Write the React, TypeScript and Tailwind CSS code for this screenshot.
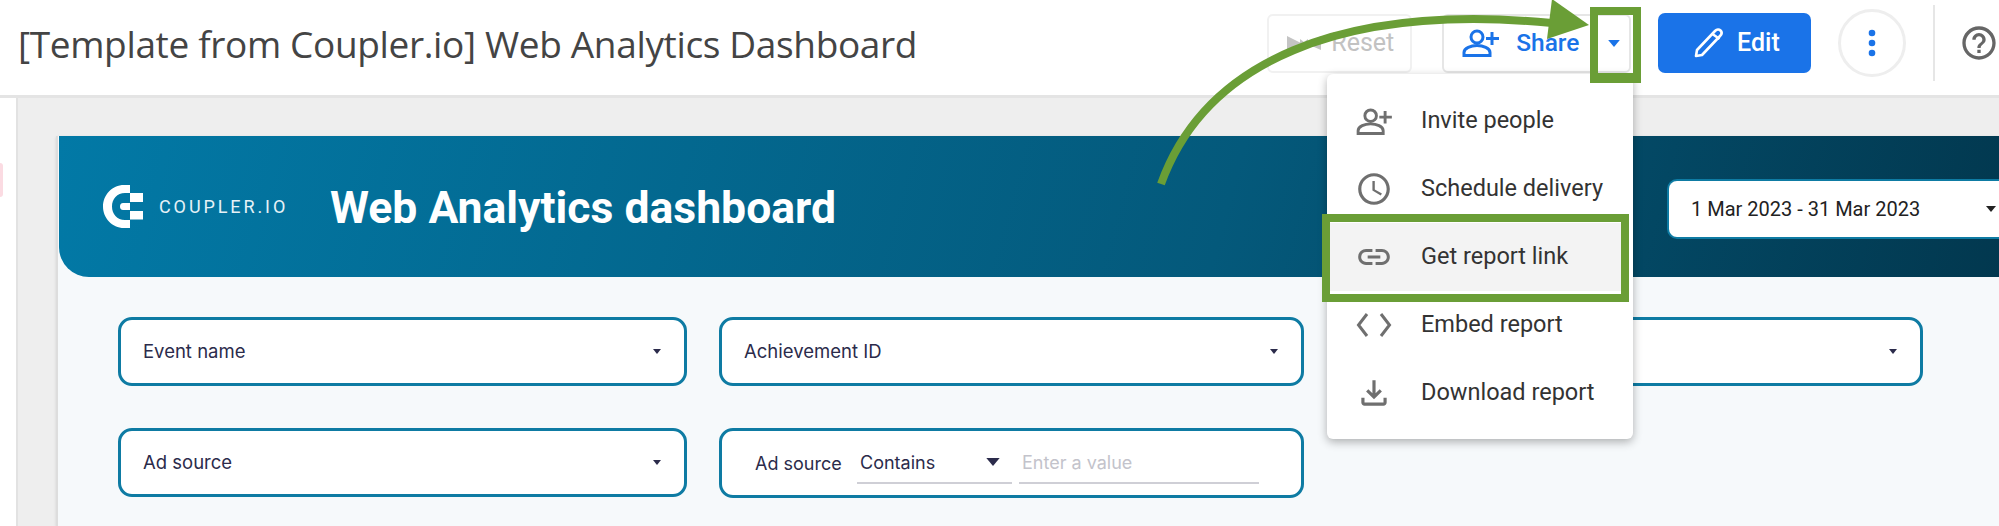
import React from "react";
import { MdOutlineSchedule, MdLink, MdOutlineFileDownload, MdHelpOutline } from "react-icons/md";

const PersonAdd = ({ className }: { className: string }) => (
  <svg viewBox="0 0 38 28" className={className} fill="none" stroke="currentColor" strokeWidth="3">
    <circle cx="15" cy="8" r="6" />
    <path d="M2 26.5v-3c0-4.500 7-7 13-7s13 2.500 13 7v3z" />
    <path d="M30 3v13M24 9.500h13" />
  </svg>
);

const Caret = ({ className }: { className: string }) => (
  <svg viewBox="0 0 10 6" className={className} fill="currentColor">
    <path d="M0 0h10L5 6z" />
  </svg>
);

const Filter = ({ label }: { label?: string }) => (
  <div className="flex h-[69px] items-center rounded-[14px] border-[3px] border-[#0e7ba3] bg-white pl-[22px] font-['Inter',sans-serif] text-[18.500px] text-[#2b2b4b]">
    <span className="flex-1">{label}</span>
    <Caret className="mr-[23px] h-[5px] w-[8px]" />
  </div>
);

const MenuItem = ({ icon, label }: { icon: React.ReactNode; label: string }) => (
  <div className="flex h-[68px] items-center">
    <span className="flex w-[94px] justify-center text-[#6f6f6f]">{icon}</span>
    <span className="text-[23.5px] text-[#333333]">{label}</span>
  </div>
);

export default function App() {
  return (
    <div className="relative h-[526px] w-[1999px] overflow-hidden bg-white font-['Roboto',sans-serif]">
      <header className="flex h-[98px] items-center border-b-[3px] border-[#e4e4e4] pb-[9px] pl-[18px]">
        <h1 className="w-[1250px] translate-y-[1px] font-['Open_Sans',sans-serif] text-[37px] font-normal tracking-[-0.35px] text-[#444444]">
          [Template from Coupler.io] Web Analytics Dashboard
        </h1>
        <button className="flex h-[59px] w-[145px] items-center rounded-[6px] border-2 border-[#f1f1f1] pl-[18px] text-[25px] text-[#c2c2c2]">
          <svg viewBox="0 0 34 16" className="mr-[10px] h-[16px] w-[34px]" fill="#c4c4c4">
            <path d="M0 1l15 7.500L0 15zM34 1L19 8.500 34 15zM13 4l4 3 4-3v8l-4-3-4 3z" />
          </svg>
          Reset
        </button>
        <button className="ml-[30px] flex h-[59px] w-[189px] items-center rounded-[6px] border-2 border-[#e6e6e6] pl-[18px] text-[24.5px] font-medium text-[#1a73e8]">
          <PersonAdd className="mr-[16px] h-[28px] w-[38px]" />
          Share
          <Caret className="ml-[28px] h-[7px] w-[14px]" />
        </button>
        <button className="ml-[27px] flex h-[60px] w-[153px] items-center rounded-[7px] bg-[#1a73e8] pl-[36px] text-[25px] font-medium text-white">
          <svg viewBox="0 0 30 30" className="mr-[13px] h-[30px] w-[30px]" fill="none" stroke="currentColor" strokeWidth="2.600" strokeLinejoin="round">
            <path d="M2 28l1-6L21 3c2-2 4-2 5.500-.500S28 6 26 8L8 27z" />
            <path d="M18.500 6l7 5" />
          </svg>
          Edit
        </button>
        <button className="ml-[27px] flex h-[68px] w-[68px] items-center justify-center rounded-full border-[3px] border-[#eeeeee]">
          <svg viewBox="0 0 8 28" className="h-[28px] w-[8px]" fill="#1a73e8">
            <circle cx="4" cy="4" r="3.300" />
            <circle cx="4" cy="14" r="3.300" />
            <circle cx="4" cy="24" r="3.300" />
          </svg>
        </button>
        <div className="ml-[27px] h-[76px] w-[2px] bg-[#e6e6e6]" />
        <MdHelpOutline className="ml-[24px] h-[40px] w-[40px] shrink-0 text-[#666666]" />
      </header>

      <div className="flex h-[428px]">
        <div className="w-[18px] border-r-2 border-[#e2e2e2] bg-white" />
        <div className="flex-1 bg-[#eeeeee] pl-[38px] pt-[38px]">
          <div className="h-full border-l-[2px] border-[#dddddd] bg-[#f6f9fb] shadow-sm">
            <div className="ml-[1px] flex h-[141px] items-center rounded-bl-[30px] bg-[linear-gradient(105deg,#0279a6,#04597b_60%,#02384f)] pl-[44px]">
              <svg viewBox="0 0 40 43" className="h-[43px] w-[40px]" fill="white">
                <path d="M27 0v8h-5C14 8 9 14 9 21.500S14 35 22 35h5v8h-6C9 43 0 33 0 21.500S9 0 21 0z" />
                <path d="M27 8h13v9H27zM27 26h13v8.500H27z" />
                <path d="M20 18h7v7h-7c-2 0-3-1.500-3-3.500s1-3.500 3-3.500z" />
              </svg>
              <span className="ml-[16px] w-[171px] text-[18px] tracking-[2.900px] text-[#e6f2f7]">COUPLER.IO</span>
              <span className="translate-y-[2px] text-[44.500px] font-bold text-white">Web Analytics dashboard</span>
              <div className="ml-[auto] flex h-[60px] w-[332px] translate-y-[2px] items-center rounded-l-[10px] border-2 border-r-0 border-[#0e7ba3] bg-white pl-[22px] text-[20px] text-[#222222]">
                <span className="whitespace-nowrap">1 Mar 2023 - 31 Mar 2023</span>
                <Caret className="ml-[66px] h-[6px] w-[10px] shrink-0" />
              </div>
            </div>

            <div className="grid grid-cols-[569px_585px_587px] gap-x-[32px] gap-y-[42px] pl-[60px] pt-[40px]">
              <Filter label="Event name" />
              <Filter label="Achievement ID" />
              <Filter />
              <Filter label="Ad source" />
              <div className="flex h-[70px] items-center rounded-[14px] border-[3px] border-[#0e7ba3] bg-white pl-[33px] font-['Inter',sans-serif] text-[18px] text-[#2b2b4b]">
                <span className="w-[102px]">Ad source</span>
                <div className="flex h-[42px] w-[155px] items-center border-b-2 border-[#cfcfd6] pl-[3px]">
                  <span className="flex-1">Contains</span>
                  <Caret className="mr-[12px] h-[8px] w-[14px]" />
                </div>
                <div className="ml-[7px] flex h-[42px] w-[240px] items-center border-b-2 border-[#cfcfd6] pl-[3px] text-[#c3c3cb]">
                  Enter a value
                </div>
              </div>
            </div>
          </div>
        </div>
      </div>

      <div className="absolute left-0 top-[163px] h-[34px] w-[3px] rounded-r-full bg-[#fbdbe2]" />

      <div className="absolute left-[1327px] top-[74px] h-[365px] w-[306px] rounded-[6px] bg-white pt-[13px] shadow-[0_3px_10px_rgba(0,0,0,0.3)]">
        <MenuItem icon={<PersonAdd className="h-[27px] w-[37px]" />} label="Invite people" />
        <MenuItem icon={<MdOutlineSchedule className="h-[38px] w-[38px]" />} label="Schedule delivery" />
        <div className="ml-[3px] mr-[12px] h-[68px] bg-[#f3f3f3]">
          <div className="ml-[-3px]">
            <MenuItem icon={<MdLink className="h-[38px] w-[38px]" />} label="Get report link" />
          </div>
        </div>
        <MenuItem
          icon={
            <svg viewBox="0 0 36 28" className="h-[28px] w-[36px]" fill="none" stroke="currentColor" strokeWidth="3">
              <path d="M11 3L2.500 14 11 25M25 3l8.500 11L25 25" />
            </svg>
          }
          label="Embed report"
        />
        <MenuItem icon={<MdOutlineFileDownload className="h-[38px] w-[38px]" />} label="Download report" />
      </div>

      <div className="absolute left-[1322px] top-[214px] h-[88px] w-[307px] border-[8px] border-[#6a9e36]" />
      <div className="absolute left-[1590px] top-[7px] h-[76px] w-[51px] border-x-[8px] border-b-[10px] border-t-[8px] border-[#6a9e36]" />

      <svg className="absolute left-0 top-0 h-[526px] w-[1999px]" viewBox="0 0 1999 526" fill="none">
        <path d="M1161 184C1205 62 1340 3 1552 23" stroke="#6a9e36" strokeWidth="8" />
        <path d="M1552 -1L1589 25L1547 39z" fill="#6a9e36" />
      </svg>
    </div>
  );
}
